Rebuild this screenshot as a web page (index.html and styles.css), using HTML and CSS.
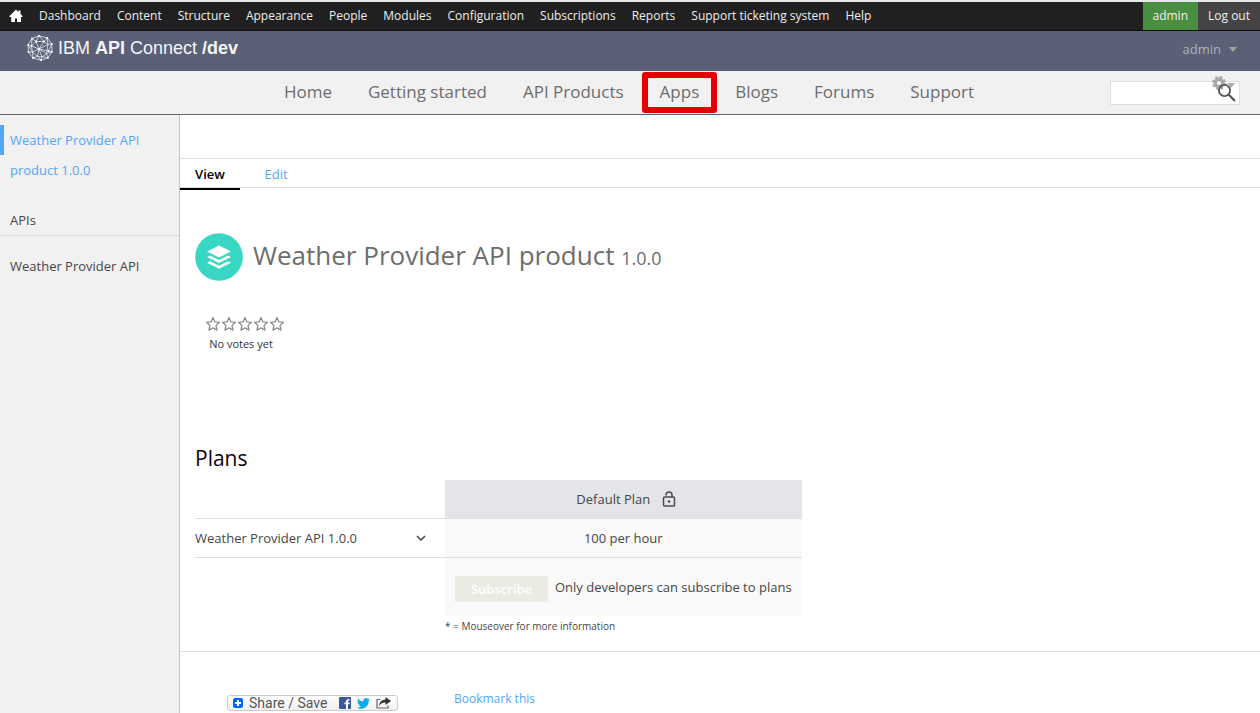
FILE: index.html
```html
<!DOCTYPE html>
<html lang="en">
<head>
<meta charset="utf-8">
<title>Weather Provider API product | IBM API Connect</title>
<link rel="stylesheet" href="styles.css">
</head>
<body>
<svg class="defs" width="0" height="0" aria-hidden="true">
  <symbol id="star" viewBox="0 0 16 16"><path d="M8 1.600l1.900 4.300 4.600.4-3.500 3.100 1 4.700L8 11.800l-4 2.300 1-4.700L1.500 6.300l4.600-.4z" fill="#fff" stroke="#8d8d8d" stroke-width="1.300" stroke-linejoin="round"/></symbol>
</svg>
<nav class="toolbar" aria-label="Administration">
  <a class="toolbar-home" href="#" aria-label="Home">
    <svg width="14" height="14" viewBox="0 0 14 14"><path d="M7 .5L.5 7v1h1.700v5H6V9.500h2V13h4V8h1.500V7L11.500 5V1.500h-2V3z" fill="#fff"/></svg>
  </a>
  <a href="#">Dashboard</a><a href="#">Content</a><a href="#">Structure</a><a href="#">Appearance</a><a href="#">People</a><a href="#">Modules</a><a href="#">Configuration</a><a href="#">Subscriptions</a><a href="#">Reports</a><a href="#">Support ticketing system</a><a href="#">Help</a>
  <div class="toolbar-user"><a class="account" href="#">admin</a><a class="logout" href="#">Log out</a></div>
</nav>
<header class="brand-bar">
  <a class="brand" href="#">
    <svg width="26" height="26" viewBox="0 0 26 26" fill="none" stroke="#e8eaf0" stroke-width=".8">
      <path d="M12 .8L5 3.500 1 10l.5 7L6 23l8 2.300 7-2.600 4-6-.2-7.700-4.600-6z"/>
      <path d="M12 .8l-3 5.700L5 3.500l-.5 7.500L1 10l4.500 7-4 0M12 .8l5 5.700 3.200-3.500.8 6.500 3.800-.5-3.300 7 3.500.7-5.500 2 1.500 4-6-1-1 3.600-3.500-4L6 23l-.5-6 5 4.300 4.500.7 4.500-3.300L21 9.500l-4-3-8 0L4.500 11l1 6L12 14 9 6.500M12 14l5-7.500M12 14l-1.500 7.300M12 14l9.500 2M12 14l7.500 4.700M12 14L4.500 11M12 14l9-4.500M12 14l3 8"/>
      <g fill="#fff" stroke="none"><circle cx="12" cy="1" r="1"/><circle cx="5" cy="3.500" r="1"/><circle cx="1.200" cy="10" r="1"/><circle cx="1.500" cy="17" r="1"/><circle cx="6" cy="23" r="1"/><circle cx="14" cy="25" r="1"/><circle cx="21" cy="22.700" r="1"/><circle cx="24.800" cy="16.700" r="1"/><circle cx="24.800" cy="9" r="1"/><circle cx="20.200" cy="3" r="1"/><circle cx="9" cy="6.500" r="1"/><circle cx="17" cy="6.500" r="1"/><circle cx="12" cy="14" r="1"/><circle cx="4.500" cy="11" r="1"/><circle cx="21.500" cy="16" r="1"/></g>
    </svg>
    <span>IBM <b>API</b> Connect <b>/dev</b></span>
  </a>
  <button class="user-menu" type="button">admin
    <svg width="8" height="5" viewBox="0 0 8 5"><path d="M0 0h8L4 5z" fill="#a3a3a3"/></svg>
  </button>
</header>
<div class="main-nav">
  <nav class="links" aria-label="Main"><a href="#">Home</a><a href="#">Getting started</a><a href="#">API Products</a><a class="highlighted" href="#">Apps</a><a href="#">Blogs</a><a href="#">Forums</a><a href="#">Support</a></nav>
  <form class="search" role="search">
    <input type="search" aria-label="Search">
    <button class="config-button" type="button" aria-label="Configure block"><svg width="24" height="14" viewBox="0 0 24 14"><g fill="none" stroke="#aaa"><circle cx="7" cy="7" r="5.900" stroke-width="2.200" stroke-dasharray="2.600 2.034"/><circle cx="7" cy="7" r="3.800" stroke-width="3.400"/></g><path d="M15 7h8l-4 5z" fill="#aaa"/></svg></button>
    <button class="search-button" type="button" aria-label="Search"><svg width="18" height="18" viewBox="0 0 18 18" fill="none" stroke="#555"><circle cx="6.500" cy="6.500" r="5.600" stroke-width="1.800"/><path d="M10.800 10.800L17 17" stroke-width="2.300"/></svg></button>
  </form>
</div>
<div class="page">
  <aside class="sidebar">
    <a class="current" href="#">Weather Provider API product 1.0.0</a>
    <h2>APIs</h2>
    <a class="api-link" href="#">Weather Provider API</a>
  </aside>
  <main>
    <nav class="tabs" aria-label="Tabs"><a class="active" href="#">View</a><a href="#">Edit</a></nav>
    <article>
      <header class="product">
        <svg width="48" height="48" viewBox="0 0 48 48"><circle cx="24" cy="24" r="23.800" fill="#37d7c3"/><g fill="#fff"><path d="M24 12.500l12 6-12 6-12-6z"/><path d="M12 24l3-1.500 9 4.500 9-4.500 3 1.500-12 6zM12 29.700l3-1.500 9 4.500 9-4.500 3 1.500-12 6z"/></g></svg>
        <h1>Weather Provider API product <small>1.0.0</small></h1>
      </header>
      <div class="rating">
        <div class="stars" role="img" aria-label="No rating">
          <svg width="16" height="16"><use href="#star"/></svg><svg width="16" height="16"><use href="#star"/></svg><svg width="16" height="16"><use href="#star"/></svg><svg width="16" height="16"><use href="#star"/></svg><svg width="16" height="16"><use href="#star"/></svg>
        </div>
        <p>No votes yet</p>
      </div>
      <h2 class="plans-title">Plans</h2>
      <table class="plans">
        <thead><tr><td></td><th scope="col"><span class="plan-name">Default Plan
          <svg width="14" height="16" viewBox="0 0 14 16" fill="none" stroke="#4b4b50" stroke-width="1.500"><rect x="1.500" y="6" width="11" height="9" rx="1"/><path d="M4 4.500V4a3 3 0 0 1 6 0v2"/><circle cx="7" cy="10.500" r="1.300" fill="#4b4b50" stroke="none"/></svg></span></th></tr></thead>
        <tbody>
          <tr class="limits"><th scope="row"><button class="expand" type="button">Weather Provider API 1.0.0
            <svg width="10" height="6" viewBox="0 0 10 6"><path d="M1 1l4 4 4-4" fill="none" stroke="#444" stroke-width="1.500"/></svg></button></th><td>100 per hour</td></tr>
          <tr class="actions"><td></td><td><div class="subscribe"><button type="button" disabled>Subscribe</button><span>Only developers can subscribe to plans</span></div></td></tr>
        </tbody>
      </table>
      <p class="note">* = Mouseover for more information</p>
    </article>
    <footer>
      <a class="share" href="#">
        <svg width="10" height="10" viewBox="0 0 10 10"><rect width="10" height="10" rx="2" fill="#0166ff"/><path d="M5 2v6M2 5h6" stroke="#fff" stroke-width="2"/></svg>
        <span>Share / Save</span>
        <svg width="12" height="12" viewBox="0 0 12 12"><rect width="12" height="12" rx="1" fill="#3b5998"/><path d="M10.500 2H9.600C7.900 2 7 3 7 4.400V5.500H5.500V7.200H7V12h2V7.200h1.500l.3-1.700H9v-.8c0-.6.2-.9.900-.9h.6z" fill="#fff"/></svg>
        <svg width="13" height="11" viewBox="0 0 24 20"><path d="M24 2.400a10 10 0 0 1-2.800.8A5 5 0 0 0 23.300.5a10 10 0 0 1-3.100 1.200A4.900 4.900 0 0 0 11.800 6.200 14 14 0 0 1 1.700 1a4.900 4.900 0 0 0 1.500 6.600A5 5 0 0 1 1 7a4.900 4.900 0 0 0 4 4.900 5 5 0 0 1-2.300 0 4.900 4.900 0 0 0 4.600 3.400A10 10 0 0 1 0 17.400 14 14 0 0 0 21.500 5 10 10 0 0 0 24 2.400z" fill="#00acee"/></svg>
        <svg width="15" height="12" viewBox="0 0 15 12"><path d="M4 2.500H1v8.500h11V8.500" fill="none" stroke="#666" stroke-width="1.200"/><path d="M9.500 0L15 4 9.500 8V5.500C6.500 5.300 4.500 6.500 3 9c.3-4 3-6.300 6.500-6.500z" fill="#333"/></svg>
      </a>
      <a class="bookmark" href="#">Bookmark this</a>
    </footer>
  </main>
</div>
</body>
</html>
```
FILE: styles.css
```css
* { box-sizing: border-box; }
html { background: #fff; }
body { margin: 0; min-height: 100vh; display: flex; flex-direction: column; border-top: 2px solid #e6e8e9; font: 13px/20px "Open Sans", "Noto Sans", sans-serif; color: #464646; }
a { text-decoration: none; color: #55a5f9; }
button { font: inherit; color: inherit; border: 0; padding: 0; background: none; }
h1, h2, p { margin: 0; font-weight: 400; }
svg { flex: none; display: block; }
.defs { position: absolute; }

.toolbar { display: flex; align-items: center; height: 29px; padding-left: 9px; background: #202020; border-bottom: 1px solid #0c0c0c; font-size: 12px; }
.toolbar a { padding: 0 8px; color: #eee; line-height: 28px; white-space: nowrap; }
.toolbar .toolbar-home { padding: 0 8px 0 0; }
.toolbar-user { display: flex; margin-left: auto; }
.toolbar .account { padding: 0 10px; background: #4a8f41; }
.toolbar .logout { padding: 0 10px; background: #444; }

.brand-bar { display: flex; justify-content: space-between; align-items: flex-start; height: 40px; padding: 4px 23px 0 27px; background: #5a6076; }
.brand { display: flex; align-items: center; gap: 5px; color: #f4f5f8; font: 18px/26px "Liberation Sans", Arial, sans-serif; }
.user-menu { display: flex; align-items: center; gap: 8px; padding-top: 4px; color: #adb0bb; }

.main-nav { display: grid; grid-template-columns: 1fr auto 1fr; align-items: center; height: 44px; padding: 0 20px 0 18px; background: #f1f1f1; border-bottom: 1px solid #666; }
.links { grid-column: 2; display: flex; }
.links a { padding: 0 18px 2px; color: #6d6d6d; font-size: 17px; line-height: 39px; white-space: nowrap; }
.links .highlighted { position: relative; }
.highlighted::after { content: ""; position: absolute; inset: 0; border: 6px solid #e60000; border-radius: 3px; }
.search { position: relative; justify-self: end; width: 130px; }
.search input { display: block; width: 100%; height: 24px; border: 1px solid #e0e0d8; background: #fff; }
.search-button { position: absolute; top: 3px; right: 4px; }
.config-button { position: absolute; top: -5px; right: 4px; }

.page { display: flex; flex: 1; }
.sidebar { width: 180px; flex: none; padding-top: 10px; background: #f1f1f1; border-right: 1px solid #c4c4c4; }
.sidebar a { display: block; padding: 0 10px; line-height: 30px; }
.sidebar .current { background: linear-gradient(#55a5f9, #55a5f9) left top / 4px 30px no-repeat; }
.sidebar h2 { padding: 25px 10px 5px; font-size: 13px; line-height: 20px; border-bottom: 1px solid #d9d9d9; }
.sidebar .api-link { padding-top: 15px; color: #464646; }

main { flex: 1; padding-top: 43px; background: #fff; }
.tabs { display: flex; height: 30px; border-top: 1px solid #e0e0e0; border-bottom: 1px solid #e0e0e0; }
.tabs a { width: 60px; height: 31px; line-height: 30px; text-align: center; }
.tabs a + a { margin-left: 6px; }
.tabs .active { color: #000; font-weight: 600; border-bottom: 2px solid #000; }
article { padding: 43px 15px 15px; border-bottom: 1px solid #e0e0e0; }
.product { display: flex; align-items: center; gap: 10px; }
.product h1 { font-size: 26px; line-height: 48px; color: #6d6d6d; }
.product small { font-size: 18px; }
.rating { width: 92px; margin-top: 34px; font-size: 11px; text-align: center; }
.stars { display: flex; padding-left: 10px; }
.rating p { line-height: 24px; color: #333; }
.plans-title { margin: 87px 0 7px; font-size: 21px; line-height: 30px; color: #100010; }
.plans { border-collapse: collapse; }
.plans th, .plans td { padding: 0; height: 39px; font-weight: 400; text-align: center; }
.plans thead th, .plans thead td { height: 38px; }
.plans tr > :first-child { width: 250px; text-align: left; }
.plans tr > :last-child { background: #f9f9f9; }
.plans thead th:last-child { background: #e4e5e9; }
.plan-name { display: flex; justify-content: center; align-items: center; gap: 12px; padding-left: 6px; }
.limits > * { border-top: 1px solid #dfdfdf; border-bottom: 1px solid #dfdfdf; }
.expand { display: flex; justify-content: space-between; align-items: center; width: 100%; padding-right: 19px; }
.plans .actions td { height: 59px; }
.subscribe { display: flex; align-items: center; gap: 7px; padding: 0 10px; }
.subscribe button { width: 93px; height: 26px; margin-top: 4px; background: #ebebe3; color: #fff; font-weight: 600; }
.note { font-size: 10px; padding-left: 250px; }
footer { display: flex; align-items: center; padding: 35px 47px 0; }
.share { display: flex; align-items: center; gap: 6px; width: 171px; height: 16px; padding: 0 6px 0 5px; margin-top: 8px; border: 1px solid #ccc; border-radius: 3px; background: linear-gradient(#fff, #f0f0f0); color: #555; font: 14px/14px Roboto, sans-serif; white-space: nowrap; }
.share span { flex: 1; }
.bookmark { margin-left: 56px; font-size: 12px; }
```
